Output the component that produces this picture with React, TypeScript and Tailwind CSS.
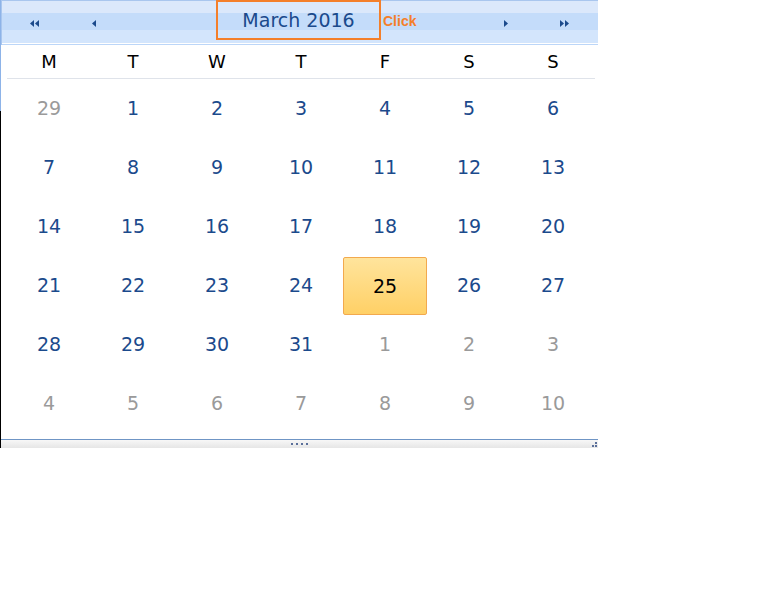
import React from 'react'

type Day = { n: number; other?: boolean }

const weeks: Day[][] = [
    [{ n: 29, other: true }, { n: 1 }, { n: 2 }, { n: 3 }, { n: 4 }, { n: 5 }, { n: 6 }],
    [{ n: 7 }, { n: 8 }, { n: 9 }, { n: 10 }, { n: 11 }, { n: 12 }, { n: 13 }],
    [{ n: 14 }, { n: 15 }, { n: 16 }, { n: 17 }, { n: 18 }, { n: 19 }, { n: 20 }],
    [{ n: 21 }, { n: 22 }, { n: 23 }, { n: 24 }, { n: 25 }, { n: 26 }, { n: 27 }],
    [{ n: 28 }, { n: 29 }, { n: 30 }, { n: 31 }, { n: 1, other: true }, { n: 2, other: true }, { n: 3, other: true }],
    [{ n: 4, other: true }, { n: 5, other: true }, { n: 6, other: true }, { n: 7, other: true }, { n: 8, other: true }, { n: 9, other: true }, { n: 10, other: true }],
]

const dayNames = ['M', 'T', 'W', 'T', 'F', 'S', 'S']

// small filled triangles used by the nav buttons
function Arrow({ dir, double }: { dir: 'left' | 'right'; double?: boolean }) {
    const tri = (x: number) =>
        dir === 'left'
            ? `M${x + 4} 0 L${x} 3.5 L${x + 4} 7 Z`
            : `M${x} 0 L${x + 4} 3.5 L${x} 7 Z`
    return (
        <svg width={double ? 9 : 4} height="7" viewBox={double ? '0 0 9 7' : '0 0 4 7'} className="block">
            <path d={tri(0)} fill="#1b4a8c" />
            {double && <path d={tri(5)} fill="#1b4a8c" />}
        </svg>
    )
}

export default function App() {
    return (
        <div className="min-h-[614px] w-[768px] bg-white" style={{ fontFamily: '"DejaVu Sans", Verdana, sans-serif' }}>
            <div className="flex w-[598px]">
                {/* left edge: blue near the top, dark below */}
                <div className="w-px shrink-0 bg-[linear-gradient(to_bottom,#8db3e8_111px,#000_111px)]" />
                <div className="flex min-w-0 flex-1 flex-col">
                    {/* header */}
                    <div className="flex h-[45px] items-center border-t border-l border-[#a9c6ee] bg-[linear-gradient(to_bottom,#dbe8fb_0px,#dbe8fb_12px,#c4dcfa_12px,#c4dcfa_29px,#d3e5fc_29px,#d3e5fc_42px,#ffffff_42px,#ffffff_43px,#bcd6f8_43px)]">
                        <div className="ml-[28px] pt-[1px]">
                            <Arrow dir="left" double />
                        </div>
                        <div className="ml-[53px] pt-[1px]">
                            <Arrow dir="left" />
                        </div>
                        <div className="ml-[120px] flex h-[40px] w-[165px] -translate-y-[3px] items-center justify-center border-2 border-[#f47f2a] text-[19px] text-[#1b4a8c]">
                            March 2016
                        </div>
                        <span
                            className="ml-[2px] -translate-y-[2px] text-[14px] font-bold text-[#f47f2a]"
                            style={{ fontFamily: '"Liberation Sans", Arial, sans-serif' }}
                        >
                            Click
                        </span>
                        <div className="ml-[88px] pt-[1px]">
                            <Arrow dir="right" />
                        </div>
                        <div className="ml-[52px] pt-[1px]">
                            <Arrow dir="right" double />
                        </div>
                    </div>

                    {/* body */}
                    <div className="pb-[6px] pl-[6px]">
                        <div className="grid h-[34px] w-[588px] grid-cols-[repeat(7,84px)] border-b border-[#dfe3ea]">
                            {dayNames.map((d, i) => (
                                <div key={i} className="flex items-center justify-center text-[18px] text-black">
                                    {d}
                                </div>
                            ))}
                        </div>
                        <div className="grid grid-cols-[repeat(7,84px)] grid-rows-[repeat(6,59px)]">
                            {weeks.flat().map((d, i) => {
                                const selected = !d.other && d.n === 25
                                return (
                                    <div
                                        key={i}
                                        className={`flex items-center justify-center text-[19px] ${
                                            selected
                                                ? 'mt-[1px] rounded-[2px] border border-[#f2a94e] bg-[linear-gradient(to_bottom,#ffe49c,#ffd066)] text-black'
                                                : d.other
                                                  ? 'text-[#9a9a9a]'
                                                  : 'text-[#1b4a8c]'
                                        }`}
                                    >
                                        {d.n}
                                    </div>
                                )
                            })}
                        </div>
                    </div>

                    {/* footer / resize bar */}
                    <div className="relative flex h-[9px] items-center justify-center border-t border-[#6f95c5] bg-[linear-gradient(to_bottom,#f7f7f7,#e6e6e6)]">
                        <div className="flex gap-[3px]">
                            {[0, 1, 2, 3].map((i) => (
                                <div key={i} className="h-[2px] w-[2px] bg-[#5a6f9a]" />
                            ))}
                        </div>
                        <div className="absolute right-[1px] bottom-[1px] grid grid-cols-2 gap-[1px]">
                            <div />
                            <div className="h-[2px] w-[2px] bg-[#5a6f9a]" />
                            <div className="h-[2px] w-[2px] bg-[#5a6f9a]" />
                            <div className="h-[2px] w-[2px] bg-[#5a6f9a]" />
                        </div>
                    </div>
                </div>
            </div>
        </div>
    )
}
